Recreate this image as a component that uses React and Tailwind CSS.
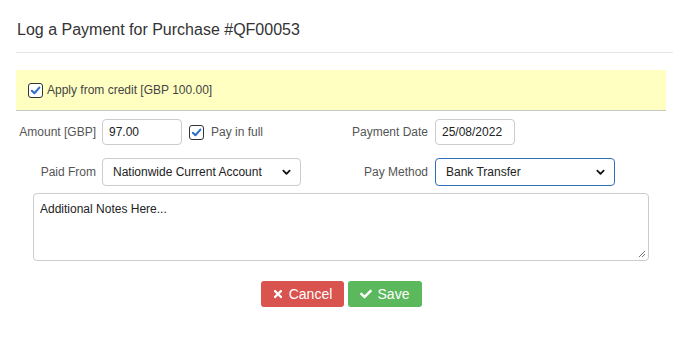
import { FaTimes, FaCheck } from "react-icons/fa";

const Check = () => (
  <span className="flex h-[15px] w-[15px] shrink-0 items-center justify-center rounded-[3px] border border-[#333] bg-white">
    <svg viewBox="0 0 12 12" className="h-[11px] w-[11px]">
      <path d="M2 6.3 L4.8 9 L10.2 2.8" fill="none" stroke="#2f6fc6" strokeWidth="2.2" strokeLinecap="round" strokeLinejoin="round" />
    </svg>
  </span>
);

const Chevron = () => (
  <svg viewBox="0 0 10 10" className="h-[9px] w-[9px]">
    <path d="M1.5 3 L5 6.5 L8.5 3" fill="none" stroke="#111" strokeWidth="2" strokeLinecap="round" strokeLinejoin="round" />
  </svg>
);

const Select = ({ value, width, focused }) => (
  <div
    className={`flex h-[28px] items-center justify-between rounded-[4px] border bg-white pl-[10px] pr-[9px] text-[12px] text-[#222] ${width} ${focused ? "border-[#2f6fb7]" : "border-[#ccc]"}`}
  >
    <span>{value}</span>
    <Chevron />
  </div>
);

export default function App() {
  return (
    <div className="h-[339px] w-[689px] bg-white px-4 font-[family-name:Liberation_Sans,Arial,sans-serif] text-[#333]">
      <div className="border-b border-[#e5e5e5] pb-[13px] pl-[1px] pt-[21px] text-[16px] leading-[18px] text-[#333]">
        Log a Payment for Purchase #QF00053
      </div>

      <div className="mt-[17px] flex h-[41px] w-[650px] items-center gap-[4px] border-b border-[#c8c8c8] bg-[#ffffc1] pl-[12px] text-[12px] text-[#444]">
        <Check />
        <span>Apply from credit [GBP 100.00]</span>
      </div>

      <div className="mt-[8px] flex h-[26px] items-center text-[12px]">
        <div className="flex w-[325px] items-center">
          <span className="w-[80px] text-right text-[#555]">Amount [GBP]</span>
          <div className="ml-[6px] flex h-[26px] w-[80px] items-center rounded-[4px] border border-[#ccc] pl-[6px] text-[#222]">97.00</div>
          <div className="ml-[7px] flex items-center gap-[7px]">
            <Check />
            <span className="text-[#555]">Pay in full</span>
          </div>
        </div>
        <div className="flex items-center">
          <span className="w-[87px] text-right text-[#555]">Payment Date</span>
          <div className="ml-[7px] flex h-[26px] w-[80px] items-center rounded-[4px] border border-[#ccc] pl-[6px] text-[#222]">25/08/2022</div>
        </div>
      </div>

      <div className="mt-[13px] flex h-[28px] items-center text-[12px]">
        <div className="flex w-[325px] items-center">
          <span className="w-[80px] text-right text-[#555]">Paid From</span>
          <div className="ml-[6px]">
            <Select value="Nationwide Current Account" width="w-[199px]" />
          </div>
        </div>
        <div className="flex items-center">
          <span className="w-[87px] text-right text-[#555]">Pay Method</span>
          <div className="ml-[7px]">
            <Select value="Bank Transfer" width="w-[180px]" focused />
          </div>
        </div>
      </div>

      <div className="relative ml-[17px] mt-[7px] h-[68px] w-[616px] rounded-[4px] border border-[#ccc] px-[6px] pt-[6px] text-[12px] text-[#222]">
        Additional Notes Here...
        <svg viewBox="0 0 8 8" className="absolute bottom-[2px] right-[2px] h-[8px] w-[8px]">
          <path d="M7 1 L1 7 M7 4 L4 7" stroke="#777" strokeWidth="1" />
        </svg>
      </div>

      <div className="mt-[20px] flex w-[650px] justify-center gap-[4px] text-[14px] text-white">
        <button className="flex h-[26px] w-[83px] items-center justify-center gap-[5px] rounded-[3px] bg-[#d9534f]">
          <FaTimes className="h-[12px] w-[12px]" />
          <span>Cancel</span>
        </button>
        <button className="flex h-[26px] w-[74px] items-center justify-center gap-[6px] rounded-[3px] bg-[#5cb85c]">
          <FaCheck className="h-[12px] w-[12px]" />
          <span>Save</span>
        </button>
      </div>
    </div>
  );
}
